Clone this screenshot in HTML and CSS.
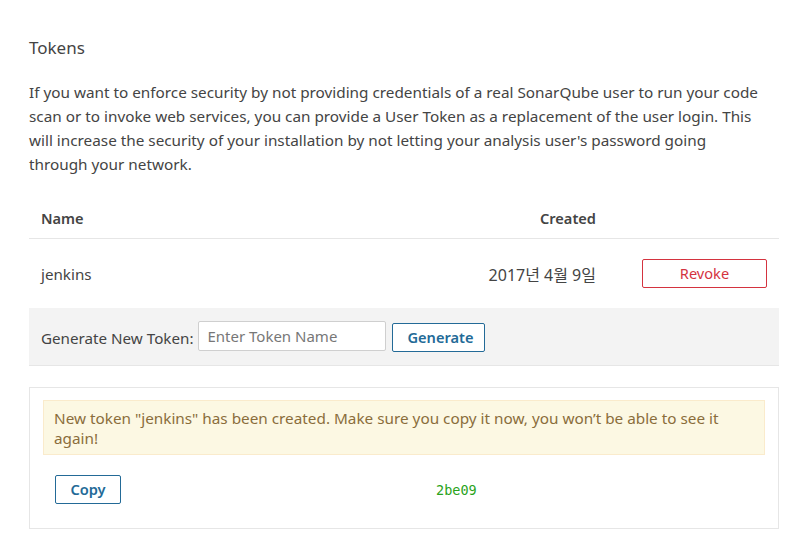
FILE: index.html
```html
<!DOCTYPE html>
<html>
<head>
<meta charset="utf-8">
<link rel="stylesheet" href="styles.css">
</head>
<body>
<div class="page">
  <h2 class="title">Tokens</h2>
  <p class="desc">If you want to enforce security by not providing credentials of a real SonarQube user to run your code scan or to invoke web services, you can provide a User Token as a replacement of the user login. This will increase the security of your installation by not letting your analysis user's password going through your network.</p>
  <table class="tokens">
    <thead>
      <tr>
        <th class="c-name">Name</th>
        <th class="c-date">Created</th>
        <th class="c-act"></th>
      </tr>
    </thead>
    <tbody>
      <tr>
        <td class="c-name">jenkins</td>
        <td class="c-date">2017년 4월 9일</td>
        <td class="c-act"><button class="btn btn-red">Revoke</button></td>
      </tr>
    </tbody>
  </table>
  <div class="gen">
    <span class="gen-label">Generate New Token:</span>
    <input class="gen-input" type="text" placeholder="Enter Token Name">
    <button class="btn btn-blue">Generate</button>
  </div>
  <div class="result">
    <div class="alert">New token "jenkins" has been created. Make sure you copy it now, you won’t be able to see it again!</div>
    <div class="copy-row">
      <button class="btn btn-blue btn-copy">Copy</button>
      <code class="token">2be09</code>
    </div>
  </div>
</div>
</body>
</html>
```

FILE: styles.css
```css
html, body {
  margin: 0;
  padding: 0;
  background: #fff;
}
body {
  font-family: "Noto Sans", "Noto Sans CJK KR", sans-serif;
  color: #444;
  font-size: 15.3px;
}
.page {
  width: 750px;
  margin-left: 29px;
  padding-top: 36px;
}
.title {
  margin: 0;
  font-size: 17px;
  font-weight: 400;
  line-height: 24px;
  color: #444;
}
.desc {
  margin: 20px 0 0 0;
  max-width: 736px;
  line-height: 24px;
  font-size: 15.3px;
  color: #444;
}
.tokens {
  width: 100%;
  border-collapse: collapse;
  margin-top: 22px;
}
.tokens th {
  font-weight: 600;
  text-align: left;
  height: 40px;
  padding: 0 12px;
  border-bottom: 1px solid #e6e6e6;
  font-size: 14.6px;
  color: #444;
  vertical-align: middle;
}
.tokens td {
  height: 69px;
  padding: 0 12px;
  font-size: 15.2px;
  vertical-align: middle;
}
.tokens td.c-date {
  font-size: 16px;
}
.tokens .c-date {
  text-align: right;
}
.tokens .c-act {
  width: 125px;
  text-align: right;
  padding-left: 34px;
}
.btn {
  font-family: "Noto Sans", sans-serif;
  font-size: 14.6px;
  background: #fff;
  border-radius: 2px;
  height: 29px;
  padding: 0 14px;
  cursor: pointer;
  line-height: 1;
}
.btn-red {
  width: 125px;
  border: 1px solid #d4333f;
  color: #d4333f;
}
.btn-blue {
  border: 1px solid #236a97;
  color: #236a97;
  font-weight: 600;
}
.gen {
  background: #f3f3f3;
  height: 58px;
  border-bottom: 1px solid #e6e6e6;
  box-sizing: border-box;
  display: flex;
  align-items: center;
  padding-left: 12px;
  gap: 5px;
}
.gen-label {
  font-size: 15.2px;
  margin-top: 2px;
}
.gen-input {
  width: 188px;
  height: 30px;
  box-sizing: border-box;
  border: 1px solid #cfcfcf;
  border-radius: 2px;
  padding: 0 8px;
  font-family: "Noto Sans", sans-serif;
  font-size: 15px;
  color: #444;
  margin-top: -2px;
}
.gen-input::placeholder {
  color: #777;
}
.gen .btn-blue {
  width: 93px;
  margin-left: 1px;
  margin-top: 2px;
}
.result {
  margin-top: 21px;
  border: 1px solid #e6e6e6;
  padding: 12px 13px 24px 13px;
}
.alert {
  background: #fcf8e3;
  border: 1px solid #faebcc;
  color: #8a6d3b;
  padding: 7px 10px 6px 10px;
  line-height: 20px;
  font-size: 15.3px;
}
.copy-row {
  display: flex;
  align-items: center;
  margin-top: 20px;
  padding-left: 12px;
}
.btn-copy {
  width: 66px;
  padding: 0;
}
.token {
  font-family: "DejaVu Sans Mono", monospace;
  font-size: 13.5px;
  color: #2aa31b;
  margin-left: 315px;
}
```
